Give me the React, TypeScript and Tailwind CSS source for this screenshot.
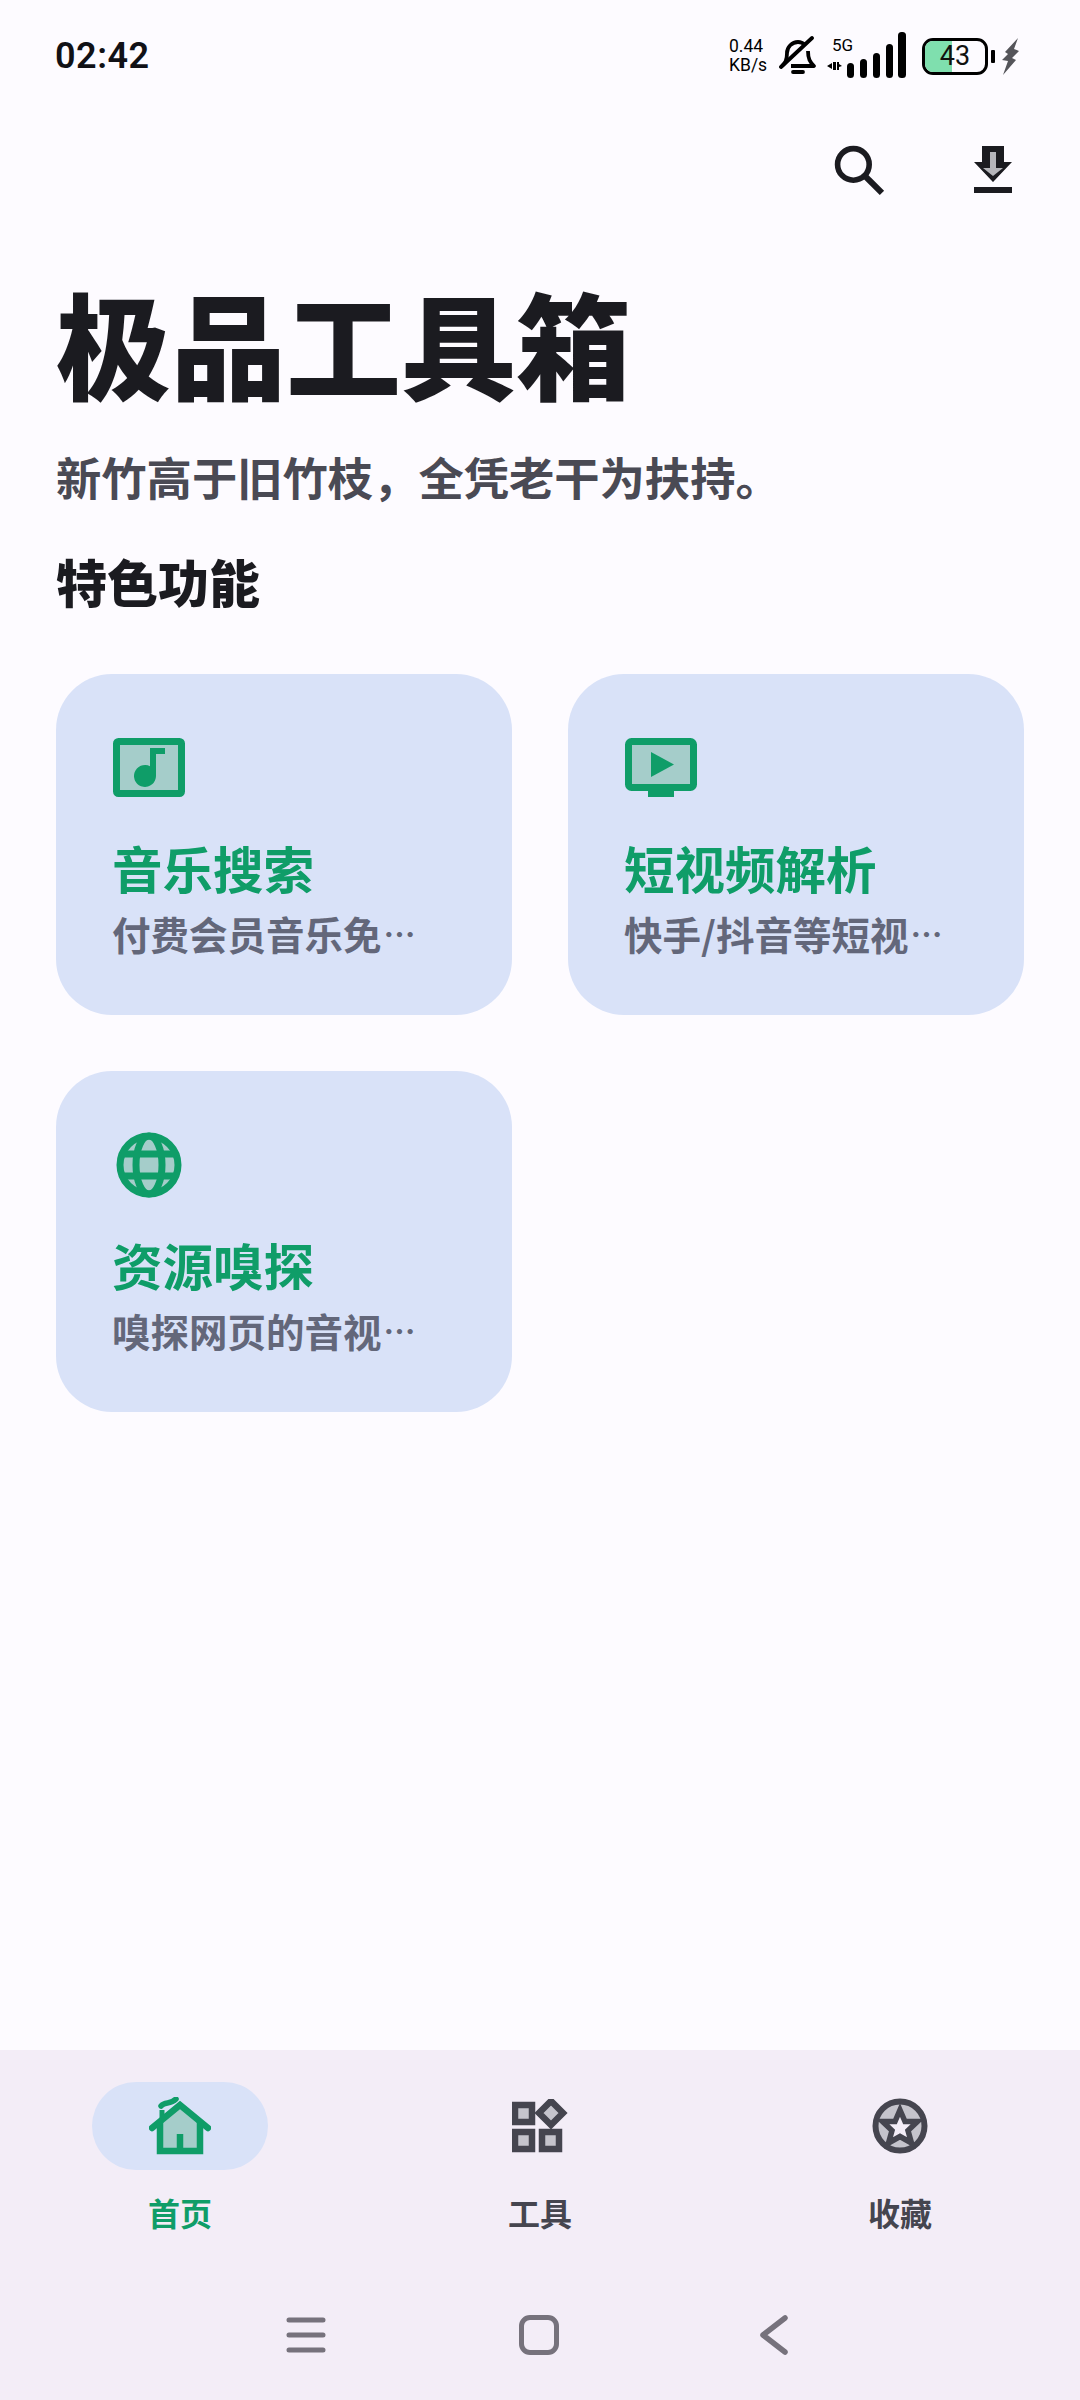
import type { ReactNode } from 'react';

const FONT = '"Noto Sans CJK SC", "Noto Sans", sans-serif';

const GREEN = '#0f9d68';
const GREEN_FILL = '#a5cdca';
const DARK = '#45454f';
const DARK_FILL = '#c5c4cc';

function StatusBar() {
  return (
    <div className="flex h-[112px] items-center justify-between pl-[55px] pr-[60px]">
      <span className="text-[36px] leading-none font-semibold tracking-[0.5px] text-[#111116]" style={{ fontFamily: 'Roboto, sans-serif' }}>
        02:42
      </span>
      <div className="flex items-center text-black" style={{ fontFamily: 'Roboto, sans-serif' }}>
        <div className="flex w-[40px] flex-col text-[17.500px] leading-[19px]">
          <span>0.44</span>
          <span>KB/s</span>
        </div>
        <svg className="ml-[10px]" width="38" height="40" viewBox="0 0 38 40" fill="none" stroke="#000" strokeWidth="3.800">
          <path d="M3 30c3-3 5-5 5-13 0-6 5-11 11-11 3 0 5 1 7 3M29 15c0 8 2 11 6 15H12" strokeLinejoin="round" />
          <path d="M2 31 33 2" strokeLinecap="round" />
          <path d="M14 36h10" strokeLinecap="round" />
        </svg>
        <div className="relative ml-[9px] h-[48px] w-[82px]">
          <span className="absolute top-[4px] left-[6px] text-[17px] leading-[18px]">5G</span>
          <svg className="absolute top-0 left-0" width="82" height="48" viewBox="0 0 82 48" fill="#000">
            <path d="M1 34l5-3v6zM7 30h3v8H7zM11 30h2v8h-2zM13 32l3 2-3 1z" />
            <rect x="21" y="31" width="7" height="15" rx="3.500" />
            <rect x="34" y="27" width="7" height="19" rx="3.500" />
            <rect x="47" y="21" width="7" height="25" rx="3.500" />
            <rect x="60" y="12" width="7" height="34" rx="3.500" />
            <rect x="72" y="0" width="8" height="46" rx="3.500" />
          </svg>
        </div>
        <div className="relative ml-[14px] h-[37px] w-[66px] overflow-hidden rounded-[11px] border-[3.500px] border-black">
          <div className="h-full w-[45%] bg-[#7fdfae]" />
          <span className="absolute inset-0 flex items-center justify-center text-[27px] leading-none text-[#111]">43</span>
        </div>
        <div className="ml-[3px] h-[13px] w-[4px] rounded-[1px] bg-black" />
        <svg className="ml-[7px]" width="18" height="37" viewBox="0 0 18 37" fill="#55555a">
          <path d="M16 0 3 14l3 2-6 6 6 1-5 14 13-15-4-2 7-7-5-2z" />
        </svg>
      </div>
    </div>
  );
}

function Toolbar() {
  return (
    <div className="flex h-[116px] items-center justify-end gap-[89px] pr-[68px]">
      <svg width="51" height="51" viewBox="0 0 50 50" fill="none" stroke="#1b1b20" strokeWidth="5.500">
        <circle cx="19" cy="19" r="15.500" />
        <path d="M30 30l17 17" strokeWidth="6" />
      </svg>
      <svg width="38" height="48" viewBox="0 0 38 48">
        <path d="M9 2h20v15h7L19 36 2 17h7z" fill="#b5b5ba" />
        <path fillRule="evenodd" d="M8 0h22v16h8L19 36 0 16h8zM16 6v16H9l10 8 10-8h-7V6z" fill="#1b1b20" />
        <rect x="0" y="41" width="38" height="6" fill="#1b1b20" />
      </svg>
    </div>
  );
}

function MusicIcon() {
  return (
    <svg width="72" height="59" viewBox="0 0 72 59">
      <rect x="3.500" y="3.500" width="65" height="52" rx="2" fill={GREEN_FILL} stroke={GREEN} strokeWidth="7" />
      <path d="M37 10h15v6H43v22a11 11 0 1 1-6-9.800z" fill={GREEN} />
    </svg>
  );
}

function VideoIcon() {
  return (
    <svg width="72" height="59" viewBox="0 0 72 59">
      <rect x="23" y="48" width="26" height="11" fill={GREEN} />
      <rect x="3.500" y="3.500" width="65" height="46" rx="3" fill={GREEN_FILL} stroke={GREEN} strokeWidth="7" />
      <path d="M26 14l23 12.500L26 39z" fill={GREEN} />
    </svg>
  );
}

function GlobeIcon() {
  return (
    <svg className="ml-[3px]" width="66" height="66" viewBox="0 0 66 66" fill="none" stroke={GREEN} strokeWidth="7">
      <circle cx="33" cy="33" r="29" fill={GREEN_FILL} />
      <ellipse cx="33" cy="33" rx="13" ry="29" />
      <path d="M5 22h56M5 44h56" />
    </svg>
  );
}

function FeatureCard({ icon, title, subtitle }: { icon: ReactNode; title: string; subtitle: string }) {
  return (
    <div className="flex h-[341px] flex-col rounded-[56px] bg-[#d9e2f8] pt-[64px] pl-[56px]">
      <div className="ml-[1px] flex h-[59px] items-center">{icon}</div>
      <div className="mt-[39px] text-[50.500px] leading-[62px] font-bold text-[#0f9d68]">{title}</div>
      <div className="mt-[10px] flex items-center text-[38.500px] leading-[50px] font-bold text-[#63677a]">
        {subtitle}
        <span className="ml-[2px] text-[32px] leading-none font-bold">⋯</span>
      </div>
    </div>
  );
}

function HomeIcon() {
  return (
    <svg width="62" height="58" viewBox="0 0 62 58" fill="none" stroke={GREEN}>
      <path d="M10 24 31 6l21 18v31H10z" fill={GREEN_FILL} strokeWidth="0" />
      <path d="M3 31 31 8l28 23" strokeWidth="6.500" strokeLinecap="round" />
      <path d="M11 25v29h40V25" strokeWidth="6.500" />
      <path d="M31 37v17" strokeWidth="6.500" />
      <path d="M13 21v-8" strokeWidth="5" />
      <path d="M12 9c4-5 9-1 15-7" strokeWidth="5.500" strokeLinecap="round" />
    </svg>
  );
}

function ToolsIcon() {
  return (
    <svg width="56" height="54" viewBox="0 0 56 54" fill={DARK_FILL} stroke={DARK} strokeWidth="6.500">
      <rect x="3" y="6" width="17" height="17" />
      <rect x="3" y="33" width="17" height="17" />
      <rect x="30" y="33" width="17" height="17" />
      <path d="M39 2 51 14 39 26 27 14z" />
    </svg>
  );
}

function StarIcon() {
  return (
    <svg width="56" height="56" viewBox="0 0 56 56">
      <circle cx="28" cy="28" r="24.500" fill={DARK_FILL} stroke={DARK} strokeWidth="6" />
      <path d="M28 12l5 11.500h12.500l-9.500 9 3.500 12.500-11.500-6.500-11.500 6.500 3.500-12.500-9.500-9h12.500z" fill="#f3edf7" stroke={DARK} strokeWidth="5.500" strokeLinejoin="miter" />
    </svg>
  );
}

function NavItem({ icon, label, active }: { icon: ReactNode; label: string; active?: boolean }) {
  return (
    <div className="flex flex-col items-center">
      <div className={`flex h-[88px] w-[176px] items-center justify-center rounded-full ${active ? 'bg-[#d9e2f8]' : ''}`}>
        {icon}
      </div>
      <div className={`mt-[18px] text-[32px] leading-[48px] font-bold ${active ? 'text-[#0f9d68]' : 'text-[#45454f]'}`}>
        {label}
      </div>
    </div>
  );
}

export default function App() {
  return (
    <div className="flex h-[2400px] w-[1080px] flex-col overflow-hidden bg-[#fdfbff]" style={{ fontFamily: FONT }}>
      <StatusBar />
      <Toolbar />

      <main className="flex-1 px-[56px]">
        <h1 className="mt-[48px] text-[115px] leading-[130px] font-black text-[#1b1b20]">极品工具箱</h1>
        <p className="mt-[38px] text-[45.300px] leading-[64px] font-bold text-[#4a4a54]">
          新竹高于旧竹枝，全凭老干为扶持。
        </p>
        <h2 className="mt-[35px] text-[51px] leading-[76px] font-black text-[#1b1b20]">特色功能</h2>

        <div className="mt-[55px] grid grid-cols-2 gap-x-[56px] gap-y-[56px]">
          <FeatureCard icon={<MusicIcon />} title="音乐搜索" subtitle="付费会员音乐免" />
          <FeatureCard icon={<VideoIcon />} title="短视频解析" subtitle="快手/抖音等短视" />
          <FeatureCard icon={<GlobeIcon />} title="资源嗅探" subtitle="嗅探网页的音视" />
        </div>
      </main>

      <nav className="h-[350px] bg-[#f3edf7]">
        <div className="grid grid-cols-3 pt-[32px]">
          <NavItem icon={<HomeIcon />} label="首页" active />
          <NavItem icon={<ToolsIcon />} label="工具" />
          <NavItem icon={<StarIcon />} label="收藏" />
        </div>
        <div className="mt-[79px] flex items-center pl-[286px]">
          <svg width="40" height="40" viewBox="0 0 40 40" stroke="#76727c" strokeWidth="5" strokeLinecap="round">
            <path d="M3 5h34M3 20h34M3 35h34" />
          </svg>
          <div className="ml-[193px] h-[40px] w-[40px] rounded-[11px] border-[5px] border-[#76727c]" />
          <svg className="ml-[201px]" width="28" height="40" viewBox="0 0 28 40" fill="none" stroke="#76727c" strokeWidth="5.500" strokeLinecap="round" strokeLinejoin="round">
            <path d="M25 3 3 20l22 17" />
          </svg>
        </div>
      </nav>
    </div>
  );
}
